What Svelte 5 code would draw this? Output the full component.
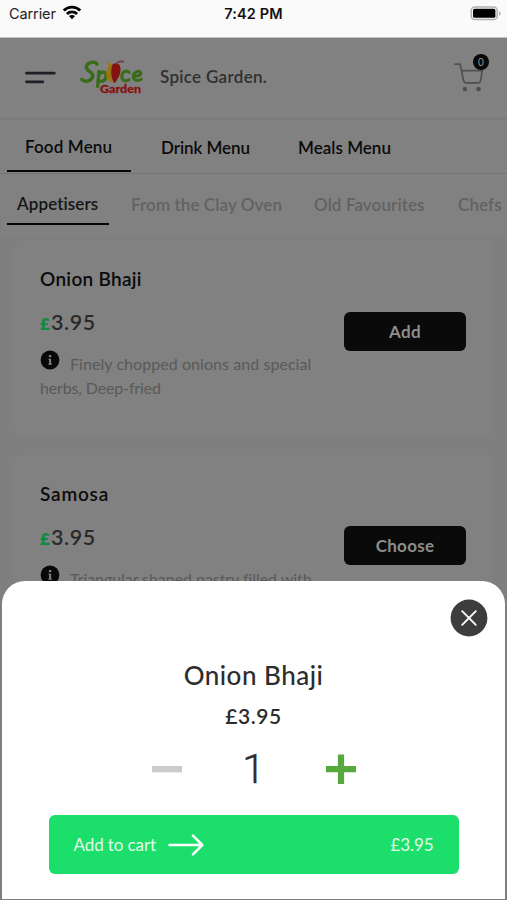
<script>
  const tabs = [
    { name: 'Food Menu', cls: 'food' },
    { name: 'Drink Menu', cls: 'drink' },
    { name: 'Meals Menu', cls: 'meals' }
  ];
  const categories = [
    { name: 'Appetisers', cls: 'app' },
    { name: 'From the Clay Oven', cls: 'clay' },
    { name: 'Old Favourites', cls: 'old' },
    { name: 'Chefs', cls: 'chefs' }
  ];
  const items = [
    { name: 'Onion Bhaji', price: '3.95', lines: ['Finely chopped onions and special', 'herbs, Deep-fried'], action: 'Add' },
    { name: 'Samosa', price: '3.95', lines: ['Triangular shaped pastry filled with', 'vegetables'], action: 'Choose' }
  ];
  let quantity = $state(1);
</script>

<div class="screen">
  <div class="status">
    <div class="carrier">
      <span>Carrier</span>
      <svg width="20" height="16" viewBox="0 0 20 16" fill="none" stroke="#050505" stroke-width="2.7">
        <path d="M1.7 5.5C6.2 .9 13.8.9 18.3 5.5" />
        <path d="M4.9 9C7.7 6.2 12.3 6.2 15.1 9" />
        <path d="M10 14.2 6.9 11.1C8.7 9.6 11.3 9.6 13.1 11.1Z" fill="#050505" stroke="none" />
      </svg>
    </div>
    <div class="time">7:42 PM</div>
    <svg class="battery" width="32" height="16" viewBox="0 0 32 16">
      <rect x="1.2" y="1" width="26" height="12.6" rx="3.6" fill="#fafafa" stroke="#b0b0ae" stroke-width="1.5" />
      <rect x="3" y="2.8" width="22.4" height="9" rx="1.6" fill="#000" />
      <path d="M29 5.2c2.2.8 2.2 3.6 0 4.4Z" fill="#b0b0ae" />
    </svg>
  </div>

  <header>
    <svg class="burger" width="31" height="14" viewBox="0 0 31 14" stroke="#1d1e26" stroke-width="2.8" stroke-linecap="round">
      <path d="M1.5 2.2H29.3M1.5 10.8H17.8" />
    </svg>
    <svg class="logo" width="64" height="38" viewBox="0 0 64 38">
      <g fill="none" stroke-linecap="round" stroke-linejoin="round">
        <path d="M17 6.3C15 2 5.4 5 6.5 10 7.5 13.6 14 14.4 12.8 18.6 11.2 23.2 5.2 24.6 1.8 21.6" stroke="#386c18" stroke-width="3.4" />
        <path d="M19 13.4 17.6 28.5M18.7 17.3c2.3-4.4 7.5-4.4 7.4.5-.3 5-4.5 6.6-7.7 4.5" stroke="#386c18" stroke-width="3.2" />
        <path d="M49.2 14.4c-3.3-3.1-7.6.1-7.4 4.2.1 4.2 4.2 5.2 7.2 3.1M53.2 18c4.2.7 8.4-.9 7.4-3.4-1.5-2.8-7-.4-7.4 3.3-.4 4.4 4.4 5.6 8 3.4" stroke="#386c18" stroke-width="3" />
      </g>
      <path d="M27 1c1.4 4.3 7 5.6 6.5 10.8-1 3.3-2.2 7-.6 13-7.2-2-8.3-9.2-5.2-14.5 1.4-2.5.4-4.7-.7-9.3Z" fill="#9a7613" />
      <path d="M32.5 6.6c2.2-2.2 6.3-1.6 7.6 1.9 1.5 4.8-.8 11.5-5.6 16.7-4-4.6-3.9-14.7-2-18.6Z" fill="#85120f" />
      <path d="M36 5.9c2.3-3.1 4.8-2.9 8-2.1" fill="none" stroke="#6b3c46" stroke-width="1.6" />
      <text x="20" y="35.3" textLength="41" lengthAdjust="spacingAndGlyphs" font-family="Lato, sans-serif" font-size="12" font-weight="900" fill="#86150f" stroke="#86150f" stroke-width=".3">Garden</text>
    </svg>
    <div class="restaurant">Spice Garden.</div>
    <div class="cart">
      <svg width="30" height="30" viewBox="0 0 30 30" fill="none" stroke="#505050" stroke-width="1.7" stroke-linecap="round" stroke-linejoin="round">
        <path d="M1 2.2H6.2L9.5 18.4Q9.9 20.8 12 20.8H24.3Q26.2 20.8 26.6 18.8L28.2 8.6H8" />
        <circle cx="10.9" cy="27" r="1.5" fill="#484848" />
        <circle cx="24.5" cy="27" r="1.5" fill="#484848" />
      </svg>
      <span class="badge">0</span>
    </div>
  </header>

  <nav class="tabs">
    {#each tabs as tab, i}
      <div class="tab {tab.cls}" class:active={i === 0}><span>{tab.name}</span></div>
    {/each}
  </nav>
  <nav class="categories">
    {#each categories as category, i}
      <div class="category {category.cls}" class:active={i === 0}><span>{category.name}</span></div>
    {/each}
  </nav>

  <main>
    {#each items as item, i}
      <article>
        <div class="info">
          <h2 class="n{i}">{item.name}</h2>
          <div class="price"><span class="pound">£</span>{item.price}</div>
          <div class="desc">
            <div class="first">
              <svg width="20" height="20" viewBox="0 0 20 20">
                <circle cx="10" cy="10" r="9.4" fill="#080808" />
                <rect x="8.9" y="5" width="2.3" height="2.2" rx=".6" fill="#858585" />
                <path d="M8.4 8.7h2.7v5h.8v1H8.3v-1h.9V9.7h-.8Z" fill="#858585" />
              </svg>
              <span class="d{i}">{item.lines[0]}</span>
            </div>
            <div class="second">{item.lines[1]}</div>
          </div>
        </div>
        <button class="action a{i}">{item.action}</button>
      </article>
    {/each}
  </main>

  <section class="sheet">
    <button class="close" aria-label="Close">
      <svg width="38" height="38" viewBox="0 0 38 38">
        <circle cx="19" cy="19" r="18.4" fill="#3d3d3d" />
        <path d="M12.2 12.2 25.8 25.8M25.8 12.2 12.2 25.8" stroke="#fff" stroke-width="1.9" stroke-linecap="round" />
      </svg>
    </button>
    <div class="title">Onion Bhaji</div>
    <div class="amount">£3.95</div>
    <div class="stepper">
      <button aria-label="Less" onclick={() => (quantity = Math.max(1, quantity - 1))}>
        <svg width="30" height="30" viewBox="0 0 30 30"><path d="M0 15.2H30" stroke="#cbcbcd" stroke-width="6.4" /></svg>
      </button>
      <span class="quantity">{quantity}</span>
      <button aria-label="More" onclick={() => (quantity += 1)}>
        <svg width="30" height="30" viewBox="0 0 30 30"><path d="M0 15.2H30M15 .5V30" stroke="#55a93d" stroke-width="6.2" /></svg>
      </button>
    </div>
    <button class="add">
      <span class="label">Add to cart</span>
      <svg width="36" height="24" viewBox="0 0 36 24" fill="none" stroke="#fff" stroke-width="2.5" stroke-linecap="round" stroke-linejoin="round">
        <path d="M1.5 12H34M25 2.7 34.3 12 25 21.3" />
      </svg>
      <span class="total">£3.95</span>
    </button>
  </section>
</div>

<style>
  :global(body) { margin: 0; background: #787878; }
  * { box-sizing: border-box; }
  svg { display: block; flex: none; }
  button { border: 0; padding: 0; background: none; font: inherit; display: block; }
  .screen {
    width: 507px; height: 900px; overflow: hidden; position: relative;
    display: flex; flex-direction: column;
    background: #7f7f7f; color: #0b0b0b;
    font-family: Lato, "Open Sans", sans-serif; white-space: nowrap;
    font-variant-ligatures: none;
  }
  .status {
    height: 38px; flex: none; background: #fafafa; display: grid;
    grid-template-columns: 1fr auto 1fr; padding: 0 5px 0 9px;
    border-bottom: 1px solid #c4c4c4; font-family: Inter, sans-serif;
  }
  .carrier { display: flex; gap: 6px; font-size: 14.5px; line-height: 27px; color: #222; letter-spacing: -.1px; }
  .carrier svg { margin-top: 5px; }
  .time { font-size: 14.5px; font-weight: 600; line-height: 27px; color: #111; letter-spacing: .15px; margin-left: -4px; }
  .battery { justify-self: end; margin-top: 6px; }
  header {
    height: 82px; flex: none; display: flex; align-items: flex-start;
    background: #818181; border-bottom: 2px solid #7b7b7b; padding-left: 25px;
  }
  .burger { margin-top: 33px; }
  .logo { margin: 20px 0 0 24px; }
  .restaurant { margin: 27px 0 0 16px; line-height: 24px; font-size: 17px; font-weight: 600; color: #303030; letter-spacing: .3px; }
  .cart { position: relative; margin: 24px 23px 0 auto; }
  .badge {
    position: absolute; left: 19px; top: -8px; width: 16px; height: 16px; border-radius: 50%;
    background: #080808; color: #999; font: 10px/16px Inter, sans-serif; text-align: center;
  }
  .tabs { height: 54px; flex: none; display: flex; padding-left: 7px; background: #818181; border-bottom: 1px solid #747474; font-size: 17px; font-weight: 600; letter-spacing: .15px; }
  .tab { height: 52px; line-height: 55px; flex: none; }
  .tab.active { width: 124px; padding-left: 18px; line-height: 53px; border-bottom: 2px solid #060606; }
  .drink { margin-left: 30px; width: 137px; letter-spacing: 0; }
  .meals { letter-spacing: .02px; }
  .drink { letter-spacing: -.08px; }
  .categories { height: 61px; flex: none; display: flex; padding-left: 7px; background: #818181; font-size: 17px; font-weight: 600; color: #626262; letter-spacing: .1px; }
  .category { height: 51px; line-height: 61px; flex: none; }
  .category.active { width: 102px; padding-left: 10px; line-height: 59px; color: #151515; border-bottom: 2px solid #060606; }
  .clay { margin-left: 22px; width: 183px; }
  .old { width: 144px; }
  main { flex: none; padding: 5px 14px 0; display: flex; flex-direction: column; gap: 19px; }
  article { height: 196px; flex: none; display: flex; justify-content: space-between; background: #818181; border-radius: 8px; padding: 0 26px; }
  h2 { margin: 26px 0 0; font-size: 19px; line-height: 26px; font-weight: 600; letter-spacing: .3px; }
  .n1 { letter-spacing: .8px; }
  .price { margin-top: 16px; font-size: 21.5px; line-height: 28px; font-weight: 600; color: #2a2a2a; letter-spacing: .6px; }
  .pound { color: #108a43; font-size: 17px; font-weight: 800; margin-right: 1px; letter-spacing: 0; }
  .desc { font-size: 16px; line-height: 24px; color: #595959; margin-top: 11px; letter-spacing: .06px; }
  .first { display: flex; gap: 10px; height: 24px; }
  .first svg { margin-top: 1px; }
  .first span { line-height: 30px; }
  .d1 { letter-spacing: -.06px; }
  .second { margin-top: 3px; letter-spacing: -.15px; }
  .action { width: 122px; height: 39px; margin: 72px 1px 0 0; flex: none; border-radius: 6px; background: #0a0a0a; color: #8d8d8d; font-size: 17px; font-weight: 700; text-align: center; }
  .a0 { letter-spacing: .3px; }
  .a1 { margin-top: 71px; letter-spacing: .3px; }
  .sheet {
    position: absolute; left: 2px; top: 581px; width: 503px; height: 318px;
    background: #fff; border-radius: 23px 23px 0 0;
    display: flex; flex-direction: column; align-items: center; color: #2d2d2d;
  }
  .close { align-self: flex-end; margin: 18px 17px 0 0; }
  .title { margin-top: 20px; font-size: 26px; line-height: 36px; font-weight: 500; letter-spacing: .5px; }
  .amount { margin-top: 8px; font-size: 21px; line-height: 30px; font-weight: 600; letter-spacing: .6px; }
  .stepper { width: 204px; height: 48px; margin-top: 14px; display: flex; justify-content: space-between; align-items: center; }
  .quantity { font-family: Roboto, sans-serif; font-size: 41px; line-height: 46px; font-weight: 300; -webkit-text-stroke: .4px #2d2d2d; }
  .add { width: 410px; height: 59px; margin-top: 22px; flex: none; border-radius: 6px; background: #1cdf6b; color: #e2fbe9; display: flex; align-items: center; padding: 0 25px 0 24px; font-size: 17px; }
  .label { padding-left: 1px; letter-spacing: -.1px; }
  .add svg { margin-left: 12px; }
  .total { margin-left: auto; letter-spacing: -.1px; }
</style>
